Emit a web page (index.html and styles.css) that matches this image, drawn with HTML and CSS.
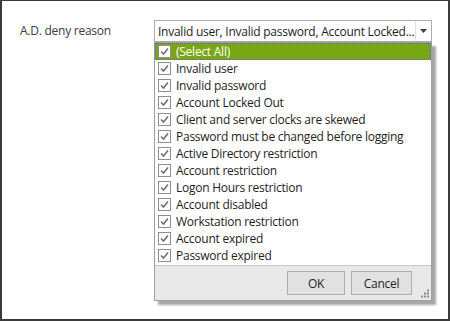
FILE: index.html
```html
<!DOCTYPE html>
<html lang="en">
<head>
    <meta charset="UTF-8">
    <title>A.D. deny reason</title>
    <link rel="stylesheet" href="styles.css">
</head>
<body>
    <div class="frame">
        <div class="field">
            <label class="field-label">A.D. deny reason</label>
            <div class="field-editor">
                <div class="combo">
                    <span class="combo-text">Invalid user, Invalid password, Account Locked...</span>
                    <span class="combo-button">
                        <svg width="7" height="4" viewBox="0 0 7 4"><path d="M0 0h7L3.5 4z" fill="#404040"/></svg>
                    </span>
                </div>
                <div class="popup">
                    <ul class="check-list">
                        <li class="item selected"><span class="check"></span>(Select All)</li>
                        <li class="item"><span class="check"></span>Invalid user</li>
                        <li class="item"><span class="check"></span>Invalid password</li>
                        <li class="item"><span class="check"></span>Account Locked Out</li>
                        <li class="item"><span class="check"></span>Client and server clocks are skewed</li>
                        <li class="item"><span class="check"></span>Password must be changed before logging</li>
                        <li class="item"><span class="check"></span>Active Directory restriction</li>
                        <li class="item"><span class="check"></span>Account restriction</li>
                        <li class="item"><span class="check"></span>Logon Hours restriction</li>
                        <li class="item"><span class="check"></span>Account disabled</li>
                        <li class="item"><span class="check"></span>Workstation restriction</li>
                        <li class="item"><span class="check"></span>Account expired</li>
                        <li class="item"><span class="check"></span>Password expired</li>
                    </ul>
                    <div class="popup-footer">
                        <button class="btn btn-ok">OK</button>
                        <button class="btn btn-cancel">Cancel</button>
                        <svg class="grip" width="10" height="10" viewBox="0 0 10 10">
                            <g fill="#8a8a8a">
                                <rect x="7" y="1" width="2" height="1"/><rect x="7.5" y="0" width="1" height="3"/>
                                <rect x="4" y="4" width="2" height="1"/><rect x="4.5" y="3" width="1" height="3"/>
                                <rect x="7" y="4" width="2" height="1"/><rect x="7.5" y="3" width="1" height="3"/>
                                <rect x="1" y="7" width="2" height="1"/><rect x="1.5" y="6" width="1" height="3"/>
                                <rect x="4" y="7" width="2" height="1"/><rect x="4.5" y="6" width="1" height="3"/>
                                <rect x="7" y="7" width="2" height="1"/><rect x="7.5" y="6" width="1" height="3"/>
                            </g>
                        </svg>
                    </div>
                </div>
            </div>
        </div>
    </div>
</body>
</html>
```

FILE: styles.css
```css
html, body {
    margin: 0;
    padding: 0;
}
body {
    font-family: "Open Sans", "Noto Sans", sans-serif;
    font-size: 12px;
    letter-spacing: -0.25px;
    color: #1e1e1e;
}
.frame {
    width: 450px;
    height: 321px;
    box-sizing: border-box;
    border: 2px solid #3a3a3a;
    border-top-width: 1px;
    background: #fff;
    padding: 19px 0 0 18px;
}
.field {
    display: flex;
    align-items: flex-start;
}
.field-label {
    width: 134px;
    line-height: 22px;
    color: #3b3b3b;
}
.field-editor {
    width: 278px;
}
.combo {
    height: 22px;
    box-sizing: border-box;
    border: 1px solid #ababab;
    display: flex;
    align-items: center;
    background: #fff;
}
.combo-text {
    flex: 1;
    padding-left: 3px;
    white-space: nowrap;
    overflow: hidden;
}
.combo-button {
    width: 15px;
    height: 20px;
    border-left: 1px solid #e2e2e2;
    display: flex;
    align-items: center;
    justify-content: center;
}
.popup {
    border: 1px solid #a0a0a0;
    background: #fff;
    box-shadow: 4px 4px 2px rgba(0, 0, 0, 0.35);
}
.check-list {
    list-style: none;
    margin: 0;
    padding: 0;
}
.item {
    height: 17px;
    line-height: 17px;
    display: flex;
    align-items: center;
    padding-left: 3px;
    white-space: nowrap;
}
.item.selected {
    background: #79a714;
    color: #fff;
    outline: 1px dotted #6a5acd;
    outline-offset: -1px;
}
.check {
    width: 13px;
    height: 13px;
    box-sizing: border-box;
    border: 1px solid #8e8e8e;
    background: #fff url("data:image/svg+xml,%3Csvg xmlns='http://www.w3.org/2000/svg' width='11' height='11'%3E%3Cpath d='M2 5.5l2.5 2.5L9 2.5' fill='none' stroke='%23707070' stroke-width='1.6'/%3E%3C/svg%3E") no-repeat center;
    margin-right: 5px;
    flex: none;
}
.popup-footer {
    position: relative;
    height: 34px;
    border-top: 1px solid #c6c6c6;
    background: #e9e9e9;
    display: flex;
    align-items: center;
    justify-content: flex-end;
    gap: 6px;
    padding-right: 19px;
    margin-top: 1px;
}
.btn {
    height: 24px;
    border: 1px solid #adadad;
    background: #e1e1e1;
    font-family: inherit;
    font-size: 12px;
    letter-spacing: inherit;
    color: #1e1e1e;
    padding: 0;
}
.btn-ok {
    width: 58px;
}
.btn-cancel {
    width: 61px;
}
.grip {
    position: absolute;
    right: 1px;
    bottom: 1px;
}
```
